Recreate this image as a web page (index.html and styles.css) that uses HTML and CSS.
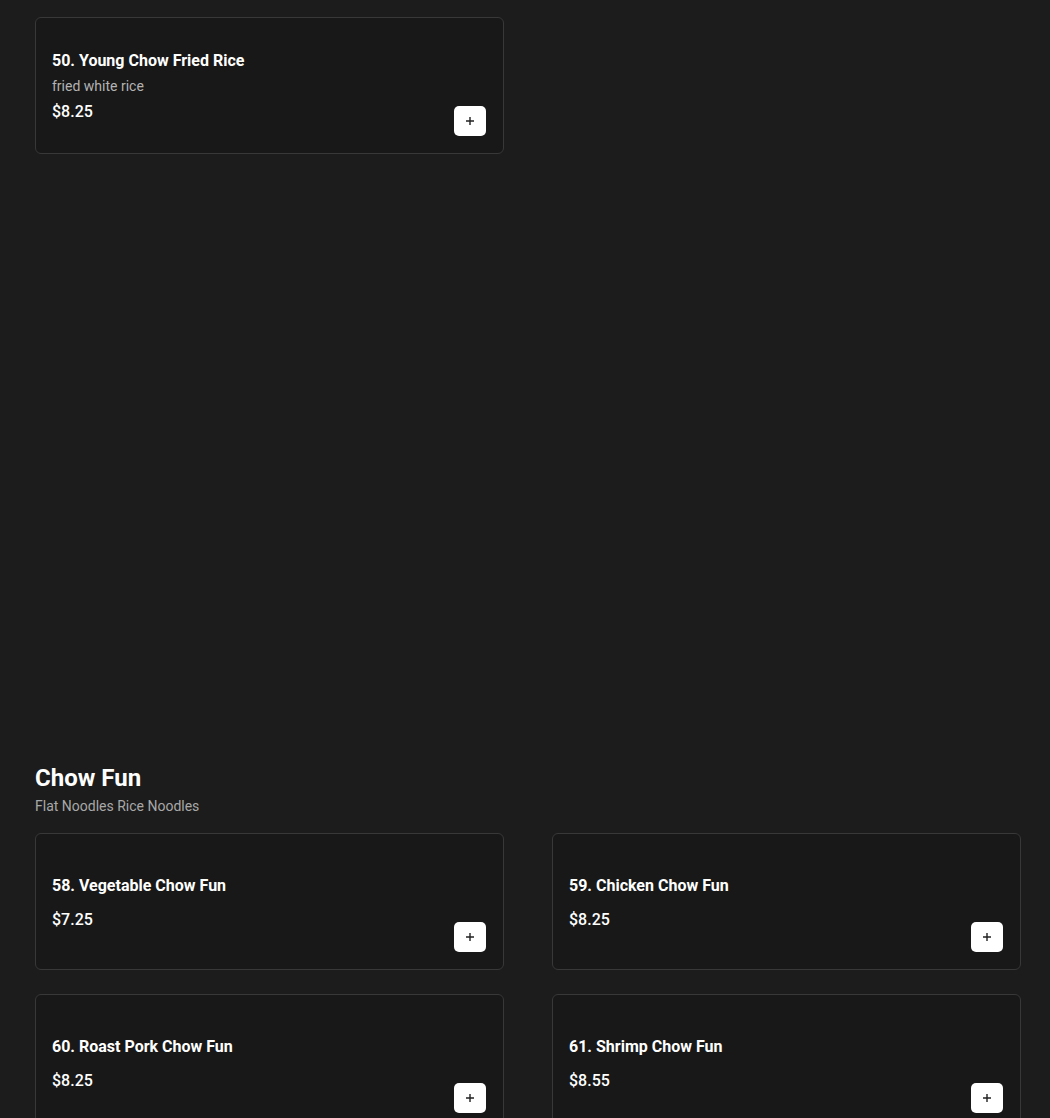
FILE: index.html
```html
<!DOCTYPE html>
<html>
<head>
<meta charset="utf-8">
<link rel="stylesheet" href="styles.css">
</head>
<body>
<div class="page">
  <section class="section first">
    <div class="grid">
      <div class="card">
        <div class="info">
          <div class="title">50. Young Chow Fried Rice</div>
          <div class="desc">fried white rice</div>
          <div class="price">$8.25</div>
        </div>
        <button class="add" aria-label="Add"><svg width="10" height="10" viewBox="0 0 10 10"><path d="M5 1v8M1 5h8" stroke="#222" stroke-width="1.4"/></svg></button>
      </div>
    </div>
  </section>

  <section class="section second">
    <h2 class="heading">Chow Fun</h2>
    <div class="subtitle">Flat Noodles Rice Noodles</div>
    <div class="grid">
      <div class="card">
        <div class="info">
          <div class="title">58. Vegetable Chow Fun</div>
          <div class="price">$7.25</div>
        </div>
        <button class="add" aria-label="Add"><svg width="10" height="10" viewBox="0 0 10 10"><path d="M5 1v8M1 5h8" stroke="#222" stroke-width="1.4"/></svg></button>
      </div>
      <div class="card">
        <div class="info">
          <div class="title">59. Chicken Chow Fun</div>
          <div class="price">$8.25</div>
        </div>
        <button class="add" aria-label="Add"><svg width="10" height="10" viewBox="0 0 10 10"><path d="M5 1v8M1 5h8" stroke="#222" stroke-width="1.4"/></svg></button>
      </div>
      <div class="card">
        <div class="info">
          <div class="title">60. Roast Pork Chow Fun</div>
          <div class="price">$8.25</div>
        </div>
        <button class="add" aria-label="Add"><svg width="10" height="10" viewBox="0 0 10 10"><path d="M5 1v8M1 5h8" stroke="#222" stroke-width="1.4"/></svg></button>
      </div>
      <div class="card">
        <div class="info">
          <div class="title">61. Shrimp Chow Fun</div>
          <div class="price">$8.55</div>
        </div>
        <button class="add" aria-label="Add"><svg width="10" height="10" viewBox="0 0 10 10"><path d="M5 1v8M1 5h8" stroke="#222" stroke-width="1.4"/></svg></button>
      </div>
    </div>
  </section>
</div>
</body>
</html>
```

FILE: styles.css
```css
html, body {
  margin: 0;
  padding: 0;
  background: #1c1c1c;
  color: #ffffff;
  font-family: Roboto, "Liberation Sans", sans-serif;
}

.page {
  padding: 17px 29px 0 35px;
}

.grid {
  display: grid;
  grid-template-columns: 1fr 1fr;
  column-gap: 48px;
  row-gap: 24px;
}

.card {
  box-sizing: border-box;
  height: 137px;
  background: #181818;
  border: 1px solid #383838;
  border-radius: 6px;
  padding: 16px 17px 17px 16px;
  display: grid;
  grid-template-columns: 1fr auto;
}

.info {
  align-self: center;
  display: flex;
  flex-direction: column;
  padding-top: 5px;
}

.title {
  font-size: 16px;
  font-weight: 700;
  line-height: 20px;
  color: #ffffff;
}

.desc {
  font-size: 14px;
  line-height: 20px;
  color: #b3b3b3;
  margin-top: 5px;
}

.price {
  font-size: 16px;
  font-weight: 500;
  line-height: 24px;
  color: #ffffff;
  margin-top: 4px;
}

.title + .price {
  margin-top: 12px;
}

.add {
  align-self: end;
  width: 32px;
  height: 30px;
  border: none;
  border-radius: 5px;
  background: #ffffff;
  padding: 0;
  display: flex;
  align-items: center;
  justify-content: center;
  cursor: pointer;
}

.second {
  margin-top: 608px;
}

.heading {
  margin: 0;
  font-size: 24px;
  font-weight: 700;
  line-height: 32px;
}

.subtitle {
  margin-top: 2px;
  font-size: 14px;
  line-height: 20px;
  color: #a8a8a8;
  margin-bottom: 17px;
}
```
